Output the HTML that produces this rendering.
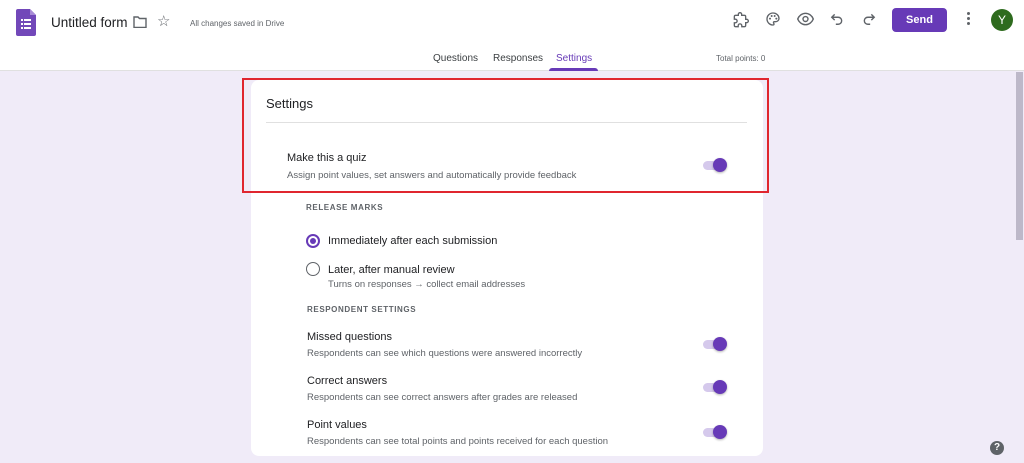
<!DOCTYPE html>
<html><head><meta charset="utf-8"><style>
*{margin:0;padding:0;box-sizing:border-box}
body{width:1024px;height:463px;overflow:hidden;background:#f0ebf8;font-family:"Liberation Sans",Arial,sans-serif;position:relative;color:#202124}
.a{position:absolute}
.hdr{left:0;top:0;width:1024px;height:71px;background:#fff;border-bottom:1px solid #e0e0e0}
.tab{font-size:10px;color:#3c4043}
.card{left:251px;top:80px;width:512px;height:376px;background:#fff;border-radius:8px}
.h1{font-size:12.5px;color:#202124}
.sub{font-size:9.5px;color:#5f6368}
.cap{font-size:8px;letter-spacing:.6px;color:#5f6368;font-weight:bold}
.tg{width:22px;height:9px;border-radius:5px;background:#d5c9ec}
.tg::after{content:"";position:absolute;left:10px;top:-3px;width:14px;height:14px;border-radius:50%;background:#673ab7;box-shadow:0 1px 2px rgba(0,0,0,.3)}
</style></head><body>
<div class="a hdr"></div>
<svg class="a" style="left:16px;top:9px" width="20" height="27" viewBox="0 0 20 27"><path d="M2 0h12l6 6v19a2 2 0 0 1-2 2H2a2 2 0 0 1-2-2V2a2 2 0 0 1 2-2z" fill="#7248b9"/><path d="M14 0l6 6h-6z" fill="#a88bd6"/><g fill="#fff"><rect x="5" y="10" width="2" height="2"/><rect x="8" y="10" width="7" height="2"/><rect x="5" y="14" width="2" height="2"/><rect x="8" y="14" width="7" height="2"/><rect x="5" y="18" width="2" height="2"/><rect x="8" y="18" width="7" height="2"/></g></svg>
<div class="a" style="left:51px;top:15px;font-size:13.5px;color:#202124">Untitled form</div>
<svg class="a" style="left:133px;top:16px" width="14" height="12" viewBox="0 0 14 12"><path d="M1 1h4l1.5 1.5H13v9H1z" fill="none" stroke="#5f6368" stroke-width="1.4"/></svg>
<div class="a" style="left:157px;top:12px;font-size:15px;color:#5f6368">☆</div>
<div class="a" style="left:190px;top:19px;font-size:8px;color:#5f6368">All changes saved in Drive</div>
<svg class="a" style="left:733px;top:12px" width="16" height="16" viewBox="0 0 24 24"><path d="M20.5 11H19V7a2 2 0 0 0-2-2h-4V3.5a2.5 2.5 0 0 0-5 0V5H4a2 2 0 0 0-2 2v3.8h1.5a2.7 2.7 0 0 1 0 5.4H2V20a2 2 0 0 0 2 2h3.8v-1.5a2.7 2.7 0 0 1 5.4 0V22H17a2 2 0 0 0 2-2v-4h1.5a2.5 2.5 0 0 0 0-5z" fill="none" stroke="#5f6368" stroke-width="2"/></svg>
<svg class="a" style="left:765px;top:11px" width="16" height="16" viewBox="0 0 24 24"><path d="M12 3a9 9 0 0 0 0 18c.8 0 1.5-.7 1.5-1.5 0-.4-.1-.7-.4-1-.2-.3-.4-.6-.4-1 0-.8.7-1.5 1.5-1.5H16a5 5 0 0 0 5-5c0-4.4-4-8-9-8z" fill="none" stroke="#5f6368" stroke-width="2"/><circle cx="7.5" cy="11.5" r="1.5" fill="#5f6368"/><circle cx="10" cy="7.5" r="1.5" fill="#5f6368"/><circle cx="14.5" cy="7.5" r="1.5" fill="#5f6368"/><circle cx="17" cy="11.5" r="1.5" fill="#5f6368"/></svg>
<svg class="a" style="left:797px;top:12px" width="17" height="14" viewBox="0 0 24 18"><path d="M12 1C7 1 2.7 4.6 1 9c1.7 4.4 6 8 11 8s9.3-3.6 11-8c-1.7-4.4-6-8-11-8z" fill="none" stroke="#5f6368" stroke-width="2"/><circle cx="12" cy="9" r="3.5" fill="none" stroke="#5f6368" stroke-width="2"/></svg>
<svg class="a" style="left:830px;top:12px" width="14" height="14" viewBox="0 0 24 24"><path d="M8 4L3 9l5 5M3 9h11a6 6 0 0 1 0 12h-4" fill="none" stroke="#5f6368" stroke-width="2.4"/></svg>
<svg class="a" style="left:862px;top:12px" width="14" height="14" viewBox="0 0 24 24"><path d="M16 4l5 5-5 5M21 9H10a6 6 0 0 0 0 12h4" fill="none" stroke="#5f6368" stroke-width="2.4"/></svg>
<div class="a" style="left:892px;top:8px;width:55px;height:24px;background:#673ab7;border-radius:4px;color:#fff;font-size:11px;font-weight:bold;text-align:center;line-height:24px">Send</div>
<div class="a" style="left:967px;top:12px;width:3px;height:3px;background:#5f6368;border-radius:50%;box-shadow:0 5px 0 #5f6368,0 10px 0 #5f6368"></div>
<div class="a" style="left:991px;top:9px;width:22px;height:22px;border-radius:50%;background:#2e6b1e;color:#fff;font-size:12px;text-align:center;line-height:22px">Y</div>
<div class="a tab" style="left:433px;top:53px">Questions</div>
<div class="a tab" style="left:493px;top:53px">Responses</div>
<div class="a tab" style="left:556px;top:53px;color:#673ab7">Settings</div>
<div class="a" style="left:549px;top:68px;width:49px;height:3px;background:#673ab7;border-radius:3px 3px 0 0"></div>
<div class="a" style="left:716px;top:54px;font-size:8px;color:#5f6368">Total points: 0</div>
<div class="a" style="left:1016px;top:72px;width:7px;height:168px;background:#bdb8c9"></div>
<div class="a" style="left:990px;top:441px;width:14px;height:14px;border-radius:50%;background:#5f6368;color:#fff;font-size:10px;font-weight:bold;text-align:center;line-height:14px">?</div>

<div class="a card"></div>
<div class="a h1" style="left:266px;top:96px;font-size:13px">Settings</div>
<div class="a" style="left:266px;top:122px;width:481px;height:1px;background:#e0e0e0"></div>
<div class="a h1" style="left:287px;top:152px;font-size:11px">Make this a quiz</div>
<div class="a sub" style="left:287px;top:170px">Assign point values, set answers and automatically provide feedback</div>
<div class="a tg" style="left:703px;top:161px"></div>
<div class="a" style="left:242px;top:78px;width:527px;height:115px;border:2.5px solid #e0262f"></div>

<div class="a cap" style="left:306px;top:203px">RELEASE MARKS</div>
<div class="a" style="left:306px;top:234px;width:14px;height:14px;border:2px solid #673ab7;border-radius:50%"></div>
<div class="a" style="left:310px;top:238px;width:6px;height:6px;background:#673ab7;border-radius:50%"></div>
<div class="a h1" style="left:328px;top:235px;font-size:11px">Immediately after each submission</div>
<div class="a" style="left:306px;top:262px;width:14px;height:14px;border:1.6px solid #5f6368;border-radius:50%"></div>
<div class="a h1" style="left:328px;top:264px;font-size:11px">Later, after manual review</div>
<div class="a sub" style="left:328px;top:279px">Turns on responses → collect email addresses</div>

<div class="a cap" style="left:307px;top:305px">RESPONDENT SETTINGS</div>
<div class="a h1" style="left:307px;top:331px;font-size:11px">Missed questions</div>
<div class="a sub" style="left:307px;top:348px">Respondents can see which questions were answered incorrectly</div>
<div class="a tg" style="left:703px;top:340px"></div>
<div class="a h1" style="left:307px;top:375px;font-size:11px">Correct answers</div>
<div class="a sub" style="left:307px;top:392px">Respondents can see correct answers after grades are released</div>
<div class="a tg" style="left:703px;top:383px"></div>
<div class="a h1" style="left:307px;top:419px;font-size:11px">Point values</div>
<div class="a sub" style="left:307px;top:436px">Respondents can see total points and points received for each question</div>
<div class="a tg" style="left:703px;top:428px"></div>
</body></html>
